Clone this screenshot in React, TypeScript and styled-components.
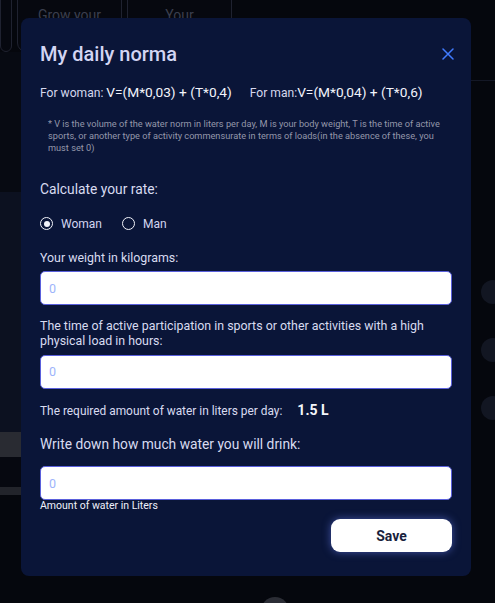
import React, { useState } from 'react';
import styled, { createGlobalStyle } from 'styled-components';

const GlobalStyle = createGlobalStyle`
  html, body {
    margin: 0;
    padding: 0;
    background: #05070d;
  }
  * {
    box-sizing: border-box;
  }
  body {
    font-family: 'Roboto', 'Liberation Sans', sans-serif;
  }
`;

/* ---------- dimmed page behind the modal ---------- */

const Page = styled.div`
  width: 495px;
  height: 603px;
  overflow: hidden;
  background: #05070d;
  display: flex;
  flex-direction: column;
`;

const CardsRow = styled.div`
  display: flex;
  gap: 5px;
  margin-top: -20px;
  height: 72px;
  flex: none;
`;

const GhostCard = styled.div<{ $w: number }>`
  width: ${p => p.$w}px;
  flex: none;
  border: 1px solid #1f2230;
  border-radius: 9px;
  background: #06080f;
  display: flex;
  justify-content: center;
  padding-top: 26px;
  font-size: 14px;
  color: #3b3f4e;
`;

const PageBody = styled.div`
  flex: none;
  height: 545px;
  display: grid;
  grid-template-columns: 1fr 40px;
`;

const LeftCol = styled.div`
  display: flex;
  flex-direction: column;
`;

const Block = styled.div<{ $h: number; $bg: string }>`
  height: ${p => p.$h}px;
  flex: none;
  background: ${p => p.$bg};
`;

const RightCol = styled.div`
  display: flex;
  flex-direction: column;
  gap: 34px;
  padding-top: 199px;
  border-top: 1px solid #141826;
  margin-top: 28px;
`;

const DotRow = styled.div`
  display: flex;
  gap: 10px;
  margin-left: -8px;
`;

const Dot = styled.div`
  width: 24px;
  height: 24px;
  border-radius: 50%;
  background: #121622;
  flex: none;
`;

const BottomDot = styled.div`
  width: 28px;
  height: 28px;
  flex: none;
  border-radius: 50%;
  background: #2b2d35;
  margin-left: 261px;
`;

/* ---------- modal ---------- */

const Overlay = styled.div`
  position: fixed;
  inset: 0;
  padding: 18px 0 0 21px;
`;

const Modal = styled.div`
  width: 450px;
  height: 558px;
  background: #0a1538;
  border-radius: 8px;
  padding: 24px 19px 0 19px;
  display: flex;
  flex-direction: column;
  color: #d8dbf0;
`;

const Header = styled.div`
  display: flex;
  justify-content: space-between;
  align-items: center;
`;

const Title = styled.h2`
  margin: 0;
  font-size: 20px;
  line-height: 24px;
  font-weight: 500;
  color: #d3d5f3;
`;

const CloseButton = styled.button`
  border: none;
  background: none;
  padding: 0;
  width: 14px;
  height: 14px;
  margin-right: -3px;
  display: flex;
  align-items: center;
  justify-content: center;
  cursor: pointer;
`;

const FormulaRow = styled.div`
  display: flex;
  gap: 18px;
  margin-top: 17px;
  line-height: 18px;
`;

const Formula = styled.div`
  font-size: 12.1px;
  color: #d5d8ee;
  span {
    font-size: 13.7px;
    color: #f2f3fb;
  }
`;

const Note = styled.p`
  margin: 15.5px 0 0 8px;
  font-size: 9.2px;
  line-height: 12px;
  color: #9497aa;
`;

const SectionTitle = styled.div<{ $mt: number }>`
  margin-top: ${p => p.$mt}px;
  font-size: 13.8px;
  line-height: 18px;
  color: #d8dbf0;
`;

const RadioRow = styled.div`
  display: flex;
  gap: 20px;
  margin-top: 17.5px;
`;

const RadioLabel = styled.label`
  display: flex;
  align-items: center;
  gap: 8px;
  font-size: 12px;
  line-height: 16px;
  color: #d3d6f0;
  cursor: pointer;
`;

const RadioCircle = styled.span<{ $on: boolean }>`
  width: 13px;
  height: 13px;
  border-radius: 50%;
  border: 1.5px solid #f2f3fa;
  display: flex;
  align-items: center;
  justify-content: center;
  &::after {
    content: '';
    width: 6px;
    height: 6px;
    border-radius: 50%;
    background: #f2f3fa;
    display: ${p => (p.$on ? 'block' : 'none')};
  }
`;

const FieldLabel = styled.div<{ $mt: number }>`
  margin-top: ${p => p.$mt}px;
  font-size: 12.4px;
  line-height: 15.5px;
  color: #d8dbf0;
`;

const Input = styled.input<{ $mt: number }>`
  margin-top: ${p => p.$mt}px;
  width: 412px;
  height: 34px;
  border: 1px solid #5a60dc;
  border-radius: 5px;
  background: #ffffff;
  padding: 0 8px;
  font-family: 'Roboto', 'Liberation Sans', sans-serif;
  font-size: 12.5px;
  color: #1b2040;
  outline: none;
  &::placeholder {
    color: #9db4fb;
  }
`;

const ResultRow = styled.div`
  display: flex;
  align-items: baseline;
  gap: 15px;
  margin-top: 13.5px;
  font-size: 11.9px;
  line-height: 16px;
  color: #d8dbf0;
`;

const ResultValue = styled.span`
  font-size: 14px;
  font-weight: 700;
  color: #f4f5fb;
`;

const Hint = styled.div`
  margin-top: 0;
  font-size: 10.5px;
  line-height: 11px;
  color: #eef0fa;
`;

const Footer = styled.div`
  display: flex;
  justify-content: flex-end;
  margin-top: 8px;
`;

const SaveButton = styled.button`
  width: 121px;
  height: 33px;
  border: none;
  border-radius: 9px;
  background: #ffffff;
  font-family: 'Roboto', 'Liberation Sans', sans-serif;
  font-size: 14px;
  font-weight: 700;
  color: #1a1f3d;
  box-shadow: 0 0 9px rgba(110, 135, 255, 0.55);
  cursor: pointer;
`;

const App = () => {
  const [gender, setGender] = useState<'woman' | 'man'>('woman');

  return (
    <>
      <GlobalStyle />
      <Page>
        <CardsRow>
          <GhostCard $w={12} />
          <GhostCard $w={105}>Grow your</GhostCard>
          <GhostCard $w={105}>Your</GhostCard>
        </CardsRow>
        <PageBody>
          <LeftCol>
            <Block $h={140} $bg="#070a12" />
            <Block $h={240} $bg="#0c1120" />
            <Block $h={25} $bg="#292b32" />
            <Block $h={30} $bg="#060810" />
            <Block $h={8} $bg="#22242b" />
          </LeftCol>
          <RightCol>
            <DotRow><Dot /><Dot /></DotRow>
            <DotRow><Dot /><Dot /></DotRow>
            <DotRow><Dot /><Dot /></DotRow>
          </RightCol>
        </PageBody>
        <BottomDot />
      </Page>

      <Overlay>
        <Modal>
          <Header>
            <Title>My daily norma</Title>
            <CloseButton aria-label="Close">
              <svg width="12" height="12" viewBox="0 0 12 12" fill="none">
                <path d="M1 1L11 11M11 1L1 11" stroke="#407bff" strokeWidth="1.5" strokeLinecap="round" />
              </svg>
            </CloseButton>
          </Header>

          <FormulaRow>
            <Formula>For woman: <span>V=(M*0,03) + (T*0,4)</span></Formula>
            <Formula>For man:<span>V=(M*0,04) + (T*0,6)</span></Formula>
          </FormulaRow>

          <Note>
            * V is the volume of the water norm in liters per day, M is your body weight, T is the time of active
            sports, or another type of activity commensurate in terms of loads(in the absence of these, you
            must set 0)
          </Note>

          <SectionTitle $mt={26.5}>Calculate your rate:</SectionTitle>

          <RadioRow>
            <RadioLabel onClick={() => setGender('woman')}>
              <RadioCircle $on={gender === 'woman'} />
              Woman
            </RadioLabel>
            <RadioLabel onClick={() => setGender('man')}>
              <RadioCircle $on={gender === 'man'} />
              Man
            </RadioLabel>
          </RadioRow>

          <FieldLabel $mt={18.5}>Your weight in kilograms:</FieldLabel>
          <Input $mt={5.5} placeholder="0" />

          <FieldLabel $mt={12.5}>
            The time of active participation in sports or other activities with a high
            physical load in hours:
          </FieldLabel>
          <Input $mt={6} placeholder="0" />

          <ResultRow>
            The required amount of water in liters per day:
            <ResultValue>1.5 L</ResultValue>
          </ResultRow>

          <SectionTitle $mt={16}>Write down how much water you will drink:</SectionTitle>
          <Input $mt={13} placeholder="0" />
          <Hint>Amount of water in Liters</Hint>

          <Footer>
            <SaveButton>Save</SaveButton>
          </Footer>
        </Modal>
      </Overlay>
    </>
  );
};

export default App;
